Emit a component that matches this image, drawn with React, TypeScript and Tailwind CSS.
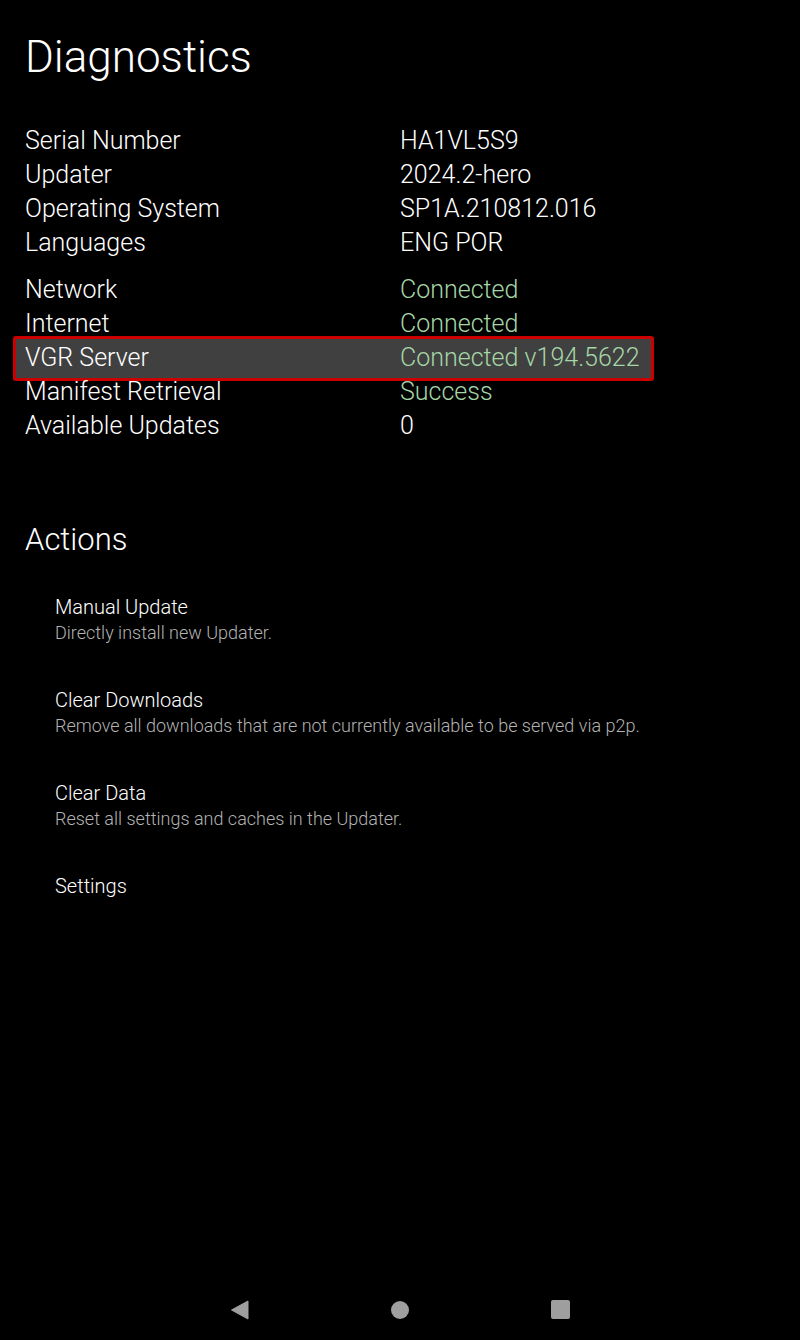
const info = [
  { label: "Serial Number", value: "HA1VL5S9" },
  { label: "Updater", value: "2024.2-hero" },
  { label: "Operating System", value: "SP1A.210812.016" },
  { label: "Languages", value: "ENG POR" },
];

const status = [
  { label: "Network", value: "Connected", ok: true },
  { label: "Internet", value: "Connected", ok: true },
  { label: "VGR Server", value: "Connected v194.5622", ok: true, focused: true },
  { label: "Manifest Retrieval", value: "Success", ok: true },
  { label: "Available Updates", value: "0", ok: false },
];

const actions = [
  { title: "Manual Update", desc: "Directly install new Updater." },
  { title: "Clear Downloads", desc: "Remove all downloads that are not currently available to be served via p2p." },
  { title: "Clear Data", desc: "Reset all settings and caches in the Updater." },
  { title: "Settings", desc: "" },
];

interface RowProps {
  label: string;
  value: string;
  ok?: boolean;
  focused?: boolean;
}

function Row({ label, value, ok, focused }: RowProps) {
  return (
    <div className="relative flex h-[34px] items-center text-[25px] leading-[34px]">
      {/* focus highlight */}
      {focused && (
        <div className="absolute left-[-12px] top-[-5px] h-[45px] w-[641px] rounded-[3px] border-[3px] border-[#cc0000] bg-[#404040]" />
      )}
      <span className="relative w-[375px] text-white">{label}</span>
      <span className={ok ? "relative text-[#a5d6a7]" : "relative text-white"}>{value}</span>
    </div>
  );
}

export default function App() {
  return (
    <div className="flex h-[1340px] w-[800px] flex-col bg-black font-['Roboto',sans-serif] font-light text-white">
      <div className="flex-1 pl-[25px]">
        <h1 className="pt-[31px] text-[44px] leading-[52px]">Diagnostics</h1>

        {/* device info */}
        <div className="mt-[41px]">
          {info.map((r) => (
            <Row key={r.label} label={r.label} value={r.value} />
          ))}
        </div>

        {/* connectivity */}
        <div className="mt-[13px]">
          {status.map((r) => (
            <Row key={r.label} {...r} />
          ))}
        </div>

        <h2 className="mt-[77px] text-[31px] leading-[40px]">Actions</h2>

        <div className="mt-[36px] flex flex-col gap-[45px] pl-[30px]">
          {actions.map((a) => (
            <div key={a.title} className="flex flex-col">
              <p className="text-[20px] leading-[22px]">{a.title}</p>
              {a.desc && <p className="mt-[4px] text-[18px] leading-[22px] text-[#b3b3b3]">{a.desc}</p>}
            </div>
          ))}
        </div>
      </div>

      {/* nav bar */}
      <div className="flex h-[60px] items-center justify-center gap-[142px] pb-[1px]">
        <svg width="19" height="20" viewBox="0 0 19 20">
          <path d="M18 1 L18 19 L1.5 10 Z" fill="#9e9e9e" strokeLinejoin="round" stroke="#9e9e9e" strokeWidth="1" />
        </svg>
        <div className="h-[18px] w-[18px] rounded-full bg-[#9e9e9e]" />
        <div className="h-[19px] w-[19px] rounded-[2px] bg-[#9e9e9e]" />
      </div>
    </div>
  );
}
